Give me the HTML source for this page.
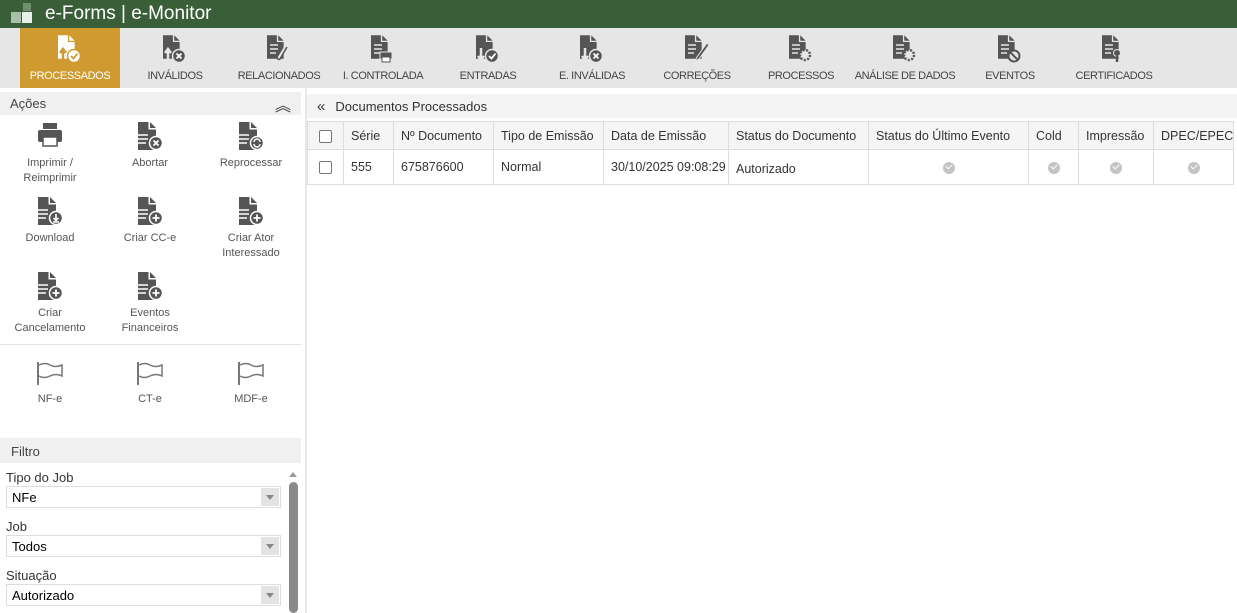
<!DOCTYPE html>
<html><head><meta charset="utf-8"><style>
*{box-sizing:border-box;margin:0;padding:0}
body{width:1237px;height:613px;overflow:hidden;background:#fff;font-family:"Liberation Sans",sans-serif;position:relative}
.top{position:absolute;left:0;top:0;width:1237px;height:28px;background:#395e38;color:#fff;font-size:19px}
.tb{position:absolute;left:0;top:28px;width:1237px;height:60px;background:#e6e6e6}
.tab{position:absolute;top:0;width:100px;height:60px;text-align:center;font-size:11px;color:#444;letter-spacing:-0.4px;white-space:nowrap}
.tab svg{position:absolute;left:38px;top:5px}
.tab span{position:absolute;left:-5px;right:-5px;top:42px}
.tab.act{background:#cf9a30;color:#fff}
.abs{position:absolute}
.hd{position:absolute;background:#f0f0f0;font-size:13px;color:#444}
.act2{position:absolute;width:100px;text-align:center;font-size:11px;color:#555;line-height:15px}
.act2 svg{display:block;margin:0 auto 6px}
table{border-collapse:collapse;font-size:12.5px;color:#333;table-layout:fixed;width:926px}
td,th{border:1px solid #ddd;font-weight:normal;text-align:left;padding:0 7px;white-space:nowrap;overflow:hidden}
th{height:28px;background:#f5f5f5}
td{height:35px}
.cb{display:inline-block;width:13px;height:13px;border:1px solid #777;border-radius:2px;background:#fff;vertical-align:middle}
.sel{position:absolute;left:6px;width:275px;height:22px;border:1px solid #ddd;font-size:13px;color:#000;padding:3px 5px}
.sel i{position:absolute;right:1px;top:1px;width:18px;height:18px;background:#e3e3e3}
.sel i:after{content:"";position:absolute;left:5px;top:7px;border:4px solid transparent;border-top:5px solid #888}
.lbl{position:absolute;left:6px;font-size:13px;color:#333}
.chk{display:inline-block;width:12px;height:12px;border-radius:50%;background:#c4c4c4;position:relative;vertical-align:middle}
.chk:after{content:"";position:absolute;left:3px;top:2px;width:5px;height:3px;border-left:1.6px solid #fff;border-bottom:1.6px solid #fff;transform:rotate(-45deg)}
</style></head><body>
<svg width="0" height="0" style="position:absolute"><defs>
<symbol id="doc" viewBox="0 0 20 26"><path d="M0 0H11V7.5H18.5V26H0Z" fill="currentColor"/><path d="M12.5 0L18.5 6H12.5Z" fill="currentColor"/></symbol>
</defs></svg>
<div class="top"><svg class="abs" style="left:9px;top:3px" width="26" height="22"><rect x="14" y="0" width="8" height="8" fill="#6f8f6f"/><rect x="2" y="9" width="10" height="11" fill="#a8bfa8"/><rect x="13" y="9" width="10" height="11" fill="#e8efe8"/></svg><span class="abs" style="left:45px;top:3px">e-Forms | e-Monitor</span></div>
<div class="tb">
<div class="tab act" style="left:20px"><svg width="24" height="30"><use href="#doc" width="18" height="26" x="0" y="1" style="color:#fff"/><path d="M5 27V17M2 20L5 16L8 20" stroke="#cf9a30" stroke-width="2.5" fill="none"/><circle cx="16" cy="23" r="6.5" fill="#fff" stroke="#cf9a30" stroke-width="1.5"/><path d="M13 23L15.5 25.5L19.5 20.5" stroke="#cf9a30" stroke-width="1.8" fill="none"/></svg><span>PROCESSADOS</span></div>
<div class="tab" style="left:125px"><svg width="24" height="30"><use href="#doc" width="18" height="26" y="1" style="color:#555"/><path d="M5 27V17M2 20L5 16L8 20" stroke="#e6e6e6" stroke-width="2.5" fill="none"/><circle cx="16" cy="23" r="6.5" fill="#555" stroke="#e6e6e6" stroke-width="1.5"/><path d="M13.5 20.5L18.5 25.5M18.5 20.5L13.5 25.5" stroke="#fff" stroke-width="1.8"/></svg><span>INVÁLIDOS</span></div>
<div class="tab" style="left:229px"><svg width="24" height="30"><use href="#doc" width="18" height="26" y="1" style="color:#555"/><path d="M3 12H11M3 16H11M3 20H9" stroke="#e6e6e6" stroke-width="1.5"/><path d="M20 14L13 26a2 2 0 0 1-3-2l6-10" stroke="#555" stroke-width="1.6" fill="#e6e6e6"/></svg><span>RELACIONADOS</span></div>
<div class="tab" style="left:333px"><svg width="24" height="30"><use href="#doc" width="18" height="26" y="1" style="color:#555"/><path d="M3 12H11M3 16H11M3 20H9" stroke="#e6e6e6" stroke-width="1.5"/><rect x="9" y="19" width="12" height="7" fill="#555" stroke="#e6e6e6"/><rect x="11" y="24" width="8" height="5" fill="#fff" stroke="#555"/></svg><span>I. CONTROLADA</span></div>
<div class="tab" style="left:438px"><svg width="24" height="30"><use href="#doc" width="18" height="26" y="1" style="color:#555"/><path d="M5 15V26M2 23L5 27L8 23" stroke="#e6e6e6" stroke-width="2.5" fill="none"/><circle cx="16" cy="23" r="6.5" fill="#555" stroke="#e6e6e6" stroke-width="1.5"/><path d="M13 23L15.5 25.5L19.5 20.5" stroke="#fff" stroke-width="1.8" fill="none"/></svg><span>ENTRADAS</span></div>
<div class="tab" style="left:542px"><svg width="24" height="30"><use href="#doc" width="18" height="26" y="1" style="color:#555"/><path d="M5 15V26M2 23L5 27L8 23" stroke="#e6e6e6" stroke-width="2.5" fill="none"/><circle cx="16" cy="23" r="6.5" fill="#555" stroke="#e6e6e6" stroke-width="1.5"/><path d="M13.5 20.5L18.5 25.5M18.5 20.5L13.5 25.5" stroke="#fff" stroke-width="1.8"/></svg><span>E. INVÁLIDAS</span></div>
<div class="tab" style="left:647px"><svg width="24" height="30"><use href="#doc" width="18" height="26" y="1" style="color:#555"/><path d="M3 12H11M3 16H11M3 20H9" stroke="#e6e6e6" stroke-width="1.5"/><path d="M22 10L12 24L10 28L14 26L24 12Z" fill="#555" stroke="#e6e6e6"/></svg><span>CORREÇÕES</span></div>
<div class="tab" style="left:751px"><svg width="24" height="30"><use href="#doc" width="18" height="26" y="1" style="color:#555"/><path d="M3 12H11M3 16H11M3 20H9" stroke="#e6e6e6" stroke-width="1.5"/><circle cx="16" cy="22" r="5" fill="#e6e6e6" stroke="#555" stroke-width="2.5" stroke-dasharray="2 1.5"/></svg><span>PROCESSOS</span></div>
<div class="tab" style="left:855px"><svg width="24" height="30"><use href="#doc" width="18" height="26" y="1" style="color:#555"/><path d="M3 12H11M3 16H11M3 20H9" stroke="#e6e6e6" stroke-width="1.5"/><circle cx="16" cy="22" r="5" fill="#e6e6e6" stroke="#555" stroke-width="2.5" stroke-dasharray="2 1.5"/></svg><span>ANÁLISE DE DADOS</span></div>
<div class="tab" style="left:960px"><svg width="24" height="30"><use href="#doc" width="18" height="26" y="1" style="color:#555"/><path d="M3 12H11M3 16H11M3 20H9" stroke="#e6e6e6" stroke-width="1.5"/><circle cx="16" cy="23" r="5.5" fill="#e6e6e6" stroke="#555" stroke-width="2"/><path d="M12.5 19.5L19.5 26.5" stroke="#555" stroke-width="2"/></svg><span>EVENTOS</span></div>
<div class="tab" style="left:1064px"><svg width="24" height="30"><use href="#doc" width="18" height="26" y="1" style="color:#555"/><path d="M3 12H11M3 16H11M3 20H9" stroke="#e6e6e6" stroke-width="1.5"/><circle cx="15" cy="20" r="3.5" fill="#555" stroke="#e6e6e6"/><path d="M15 23V29" stroke="#555" stroke-width="2.5"/></svg><span>CERTIFICADOS</span></div>
</div>

<div class="hd" style="left:0;top:92px;width:301px;height:23px;padding:4px 10px">Ações<span class="abs" style="right:10px;top:0px;font-size:16px;color:#333">︽</span></div>
<div class="abs" style="left:305px;top:88px;width:2px;height:525px;background:#e8e8e8"></div>

<svg width="0" height="0" style="position:absolute"><defs>
<symbol id="ad" viewBox="0 0 26 28"><path d="M1 0H11.5V7.5H19V28H1Z" fill="#555"/><path d="M13 0L19 6H13Z" fill="#555"/><path d="M0 13H11M0 17H11M0 21H9" stroke="#fff" stroke-width="1.5"/><circle cx="19" cy="21" r="6.5" fill="#555" stroke="#fff" stroke-width="1.5"/></symbol>
</defs></svg>
<div class="act2" style="left:0;top:122px"><svg width="26" height="28"><rect x="6" y="1" width="14" height="6" fill="#555"/><rect x="1" y="8" width="24" height="12" rx="2" fill="#555"/><rect x="6" y="15" width="14" height="9" fill="#fff" stroke="#555" stroke-width="1.5"/></svg>Imprimir /<br>Reimprimir</div>
<div class="act2" style="left:100px;top:122px"><svg width="26" height="28"><use href="#ad"/><path d="M16.5 18.5L21.5 23.5M21.5 18.5L16.5 23.5" stroke="#fff" stroke-width="1.8"/></svg>Abortar</div>
<div class="act2" style="left:201px;top:122px"><svg width="26" height="28"><use href="#ad"/><path d="M16 20a3 3 0 0 1 6 0M22 22a3 3 0 0 1-6 0" stroke="#fff" stroke-width="1.5" fill="none"/></svg>Reprocessar</div>
<div class="act2" style="left:0;top:197px"><svg width="26" height="28"><use href="#ad"/><path d="M19 17V23M16.5 21L19 23.5L21.5 21M16 25H22" stroke="#fff" stroke-width="1.6" fill="none"/></svg>Download</div>
<div class="act2" style="left:100px;top:197px"><svg width="26" height="28"><use href="#ad"/><path d="M19 17.5V24.5M15.5 21H22.5" stroke="#fff" stroke-width="1.8"/></svg>Criar CC-e</div>
<div class="act2" style="left:201px;top:197px"><svg width="26" height="28"><use href="#ad"/><path d="M19 17.5V24.5M15.5 21H22.5" stroke="#fff" stroke-width="1.8"/></svg>Criar Ator<br>Interessado</div>
<div class="act2" style="left:0;top:272px"><svg width="26" height="28"><use href="#ad"/><path d="M19 17.5V24.5M15.5 21H22.5" stroke="#fff" stroke-width="1.8"/></svg>Criar<br>Cancelamento</div>
<div class="act2" style="left:100px;top:272px"><svg width="26" height="28"><use href="#ad"/><path d="M19 17.5V24.5M15.5 21H22.5" stroke="#fff" stroke-width="1.8"/></svg>Eventos<br>Financeiros</div>
<div class="abs" style="left:0;top:344px;width:301px;height:1px;background:#e5e5e5"></div>
<svg width="0" height="0" style="position:absolute"><defs><symbol id="fl" viewBox="0 0 30 26"><path d="M3 2V25" stroke="#777" stroke-width="2"/><path d="M4 5Q10 2 15 5T27 5V16Q21 13 15 16T4 16" fill="none" stroke="#777" stroke-width="1.5"/></symbol></defs></svg>
<div class="act2" style="left:0;top:360px"><svg width="30" height="26"><use href="#fl"/></svg>NF-e</div>
<div class="act2" style="left:100px;top:360px"><svg width="30" height="26"><use href="#fl"/></svg>CT-e</div>
<div class="act2" style="left:201px;top:360px"><svg width="30" height="26"><use href="#fl"/></svg>MDF-e</div>

<div class="hd" style="left:0;top:438px;width:301px;height:25px;padding:6px 11px">Filtro</div>
<div class="lbl" style="top:470px">Tipo do Job</div><div class="sel" style="top:486px">NFe<i></i></div>
<div class="lbl" style="top:519px">Job</div><div class="sel" style="top:535px">Todos<i></i></div>
<div class="lbl" style="top:568px">Situação</div><div class="sel" style="top:584px">Autorizado<i></i></div>
<div class="abs" style="left:289px;top:468px;border:4px solid transparent;border-bottom:5px solid #999"></div>
<div class="abs" style="left:289px;top:482px;width:9px;height:131px;border-radius:5px;background:#8a8a8a"></div>

<div class="hd" style="left:307px;top:94px;width:930px;height:24px;padding:4px 10px;background:#f3f3f3;color:#333"><span style="font-size:15px;margin-right:10px">«</span>Documentos Processados</div>
<table class="abs" style="left:307px;top:121px">
<colgroup><col style="width:36px"><col style="width:50px"><col style="width:100px"><col style="width:110px"><col style="width:125px"><col style="width:140px"><col style="width:160px"><col style="width:50px"><col style="width:75px"><col style="width:80px"></colgroup>
<tr><th style="text-align:center"><span class="cb"></span></th><th>Série</th><th>Nº Documento</th><th>Tipo de Emissão</th><th>Data de Emissão</th><th>Status do Documento</th><th>Status do Último Evento</th><th>Cold</th><th>Impressão</th><th>DPEC/EPEC</th></tr>
<tr><td style="text-align:center"><span class="cb"></span></td><td>555</td><td>675876600</td><td>Normal</td><td>30/10/2025 09:08:29</td><td style="padding-top:4px">Autorizado</td><td style="text-align:center"><span class="chk"></span></td><td style="text-align:center"><span class="chk"></span></td><td style="text-align:center"><span class="chk"></span></td><td style="text-align:center"><span class="chk"></span></td></tr>
</table>
</body></html>
